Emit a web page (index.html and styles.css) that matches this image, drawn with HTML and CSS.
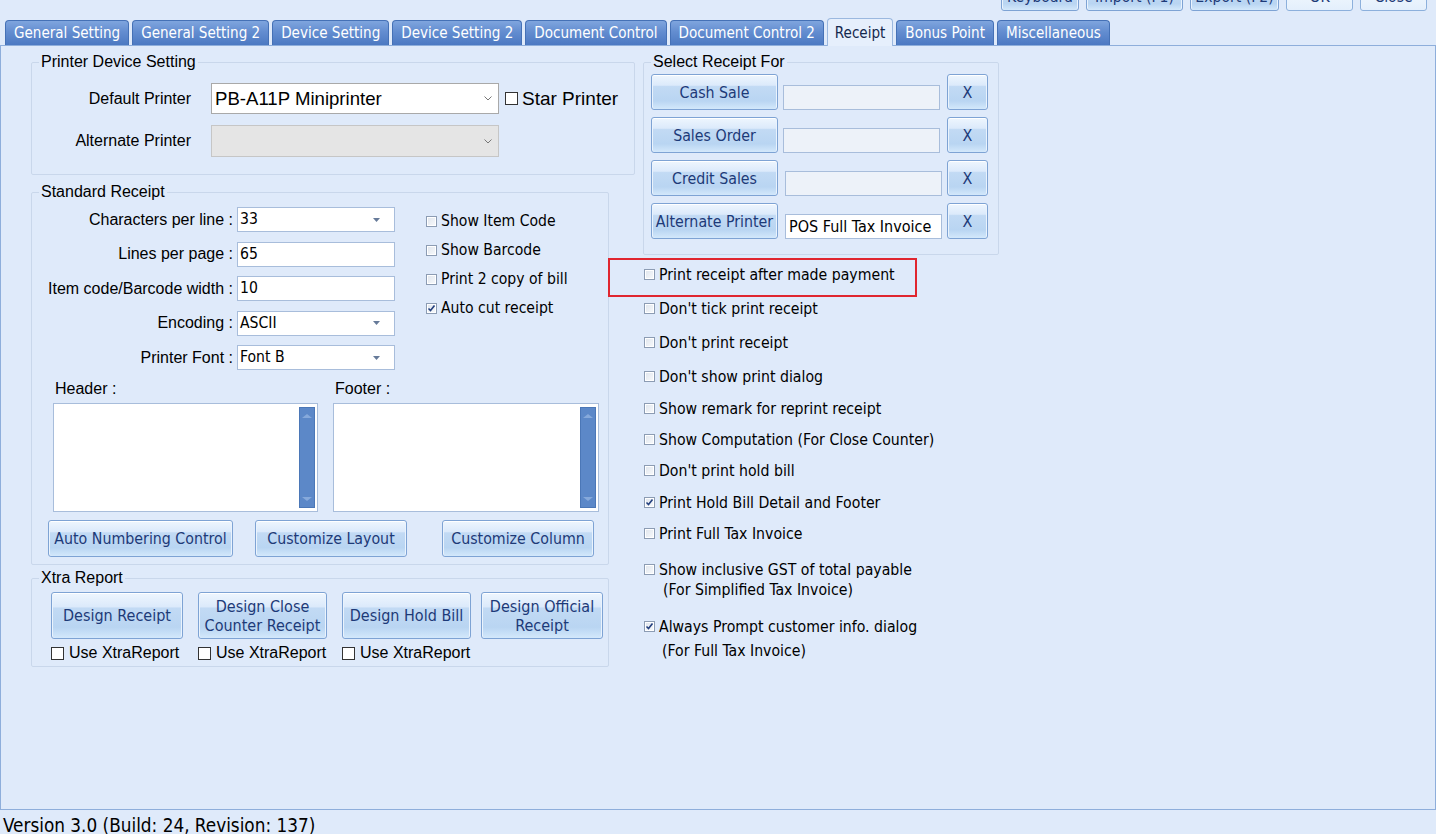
FILE: index.html
```html
<!DOCTYPE html>
<html lang="en">
<head>
    <meta charset="UTF-8">
    <title>Receipt Settings</title>
    <link rel="stylesheet" href="styles.css">
</head>
<body>
    <!-- Top toolbar (mostly scrolled above the window) -->
    <div class="toolbar">
        <button class="btn top-btn w78">Keyboard</button>
        <button class="btn top-btn w97">Import (F1)</button>
        <button class="btn top-btn w89">Export (F2)</button>
        <button class="btn top-btn top-light">OK</button>
        <button class="btn top-btn top-light">Close</button>
    </div>

    <!-- Tabs -->
    <div class="tabs">
        <div class="tab">General Setting</div>
        <div class="tab">General Setting 2</div>
        <div class="tab">Device Setting</div>
        <div class="tab">Device Setting 2</div>
        <div class="tab">Document Control</div>
        <div class="tab">Document Control 2</div>
        <div class="tab active">Receipt</div>
        <div class="tab">Bonus Point</div>
        <div class="tab">Miscellaneous</div>
    </div>

    <div class="panel">
        <div class="col-left">
            <!-- Printer Device Setting -->
            <fieldset class="group printer-group">
                <legend>Printer Device Setting</legend>
                <div class="pd-row">
                    <span class="pd-label">Default Printer</span>
                    <div class="win-select">
                        <span>PB-A11P Miniprinter</span>
                        <svg width="8" height="5" viewBox="0 0 8 5"><path d="M0.5 0.5 4 4 7.5 0.5" stroke="#777" fill="none"/></svg>
                    </div>
                    <span class="plain-check star"><span class="sq"></span>Star Printer</span>
                </div>
                <div class="pd-row pd-row-2">
                    <span class="pd-label">Alternate Printer</span>
                    <div class="win-select disabled">
                        <span></span>
                        <svg width="8" height="5" viewBox="0 0 8 5"><path d="M0.5 0.5 4 4 7.5 0.5" stroke="#777" fill="none"/></svg>
                    </div>
                </div>
            </fieldset>

            <!-- Standard Receipt -->
            <fieldset class="group receipt-group">
                <legend>Standard Receipt</legend>
                <div class="sr-top">
                    <div class="sr-form">
                        <span class="sr-label">Characters per line :</span>
                        <div class="combo"><span>33</span><svg width="7" height="4" viewBox="0 0 7 4"><path d="M0 0h7L3.5 4z" fill="#667a99"/></svg></div>
                        <span class="sr-label">Lines per page :</span>
                        <div class="field">65</div>
                        <span class="sr-label">Item code/Barcode width :</span>
                        <div class="field">10</div>
                        <span class="sr-label">Encoding :</span>
                        <div class="combo"><span>ASCII</span><svg width="7" height="4" viewBox="0 0 7 4"><path d="M0 0h7L3.5 4z" fill="#667a99"/></svg></div>
                        <span class="sr-label">Printer Font :</span>
                        <div class="combo"><span>Font B</span><svg width="7" height="4" viewBox="0 0 7 4"><path d="M0 0h7L3.5 4z" fill="#667a99"/></svg></div>
                    </div>
                    <div class="sr-checks">
                        <div class="opt"><span class="box"></span>Show Item Code</div>
                        <div class="opt"><span class="box"></span>Show Barcode</div>
                        <div class="opt"><span class="box"></span>Print 2 copy of bill</div>
                        <div class="opt"><span class="box on"><svg width="9" height="9" viewBox="0 0 9 9"><path d="M1.5 4.5 3.5 6.5 7.5 1.5" stroke="#24407e" stroke-width="1.6" fill="none"/></svg></span>Auto cut receipt</div>
                    </div>
                </div>

                <div class="memo-grid">
                    <span class="memo-label">Header :</span>
                    <span class="memo-label">Footer :</span>
                    <div class="memo"><div class="vscroll"><i class="up"></i><i class="down"></i></div></div>
                    <div class="memo"><div class="vscroll"><i class="up"></i><i class="down"></i></div></div>
                </div>

                <div class="sr-buttons">
                    <button class="btn btn-auto">Auto Numbering Control</button>
                    <button class="btn btn-layout">Customize Layout</button>
                    <button class="btn btn-column">Customize Column</button>
                </div>
            </fieldset>

            <!-- Xtra Report -->
            <fieldset class="group xtra-group">
                <legend>Xtra Report</legend>
                <div class="xr-row">
                    <div class="xr-item w132">
                        <button class="btn xr-btn">Design Receipt</button>
                        <span class="plain-check"><span class="sq"></span>Use XtraReport</span>
                    </div>
                    <div class="xr-item w129">
                        <button class="btn xr-btn">Design Close<br>Counter Receipt</button>
                        <span class="plain-check"><span class="sq"></span>Use XtraReport</span>
                    </div>
                    <div class="xr-item w129">
                        <button class="btn xr-btn">Design Hold Bill</button>
                        <span class="plain-check"><span class="sq"></span>Use XtraReport</span>
                    </div>
                    <div class="xr-item w122 last">
                        <button class="btn xr-btn">Design Official<br>Receipt</button>
                    </div>
                </div>
            </fieldset>
        </div>

        <div class="col-right">
            <!-- Select Receipt For -->
            <fieldset class="group select-group">
                <legend>Select Receipt For</legend>
                <div class="sel-list">
                    <div class="sel-row">
                        <button class="btn sel-btn">Cash Sale</button>
                        <div class="sel-field"></div>
                        <button class="btn x-btn">X</button>
                    </div>
                    <div class="sel-row">
                        <button class="btn sel-btn">Sales Order</button>
                        <div class="sel-field"></div>
                        <button class="btn x-btn">X</button>
                    </div>
                    <div class="sel-row shifted">
                        <button class="btn sel-btn">Credit Sales</button>
                        <div class="sel-field"></div>
                        <button class="btn x-btn">X</button>
                    </div>
                    <div class="sel-row shifted">
                        <button class="btn sel-btn">Alternate Printer</button>
                        <div class="sel-field filled">POS Full Tax Invoice</div>
                        <button class="btn x-btn">X</button>
                    </div>
                </div>
            </fieldset>

            <div class="opt-list">
                <div class="opt highlighted"><span class="mark"></span><span class="box"></span>Print receipt after made payment</div>
                <div class="opt wide"><span class="box"></span>Don't tick print receipt</div>
                <div class="opt wide"><span class="box"></span>Don't print receipt</div>
                <div class="opt wide"><span class="box"></span>Don't show print dialog</div>
                <div class="opt"><span class="box"></span>Show remark for reprint receipt</div>
                <div class="opt"><span class="box"></span>Show Computation (For Close Counter)</div>
                <div class="opt"><span class="box"></span>Don't print hold bill</div>
                <div class="opt"><span class="box on"><svg width="9" height="9" viewBox="0 0 9 9"><path d="M1.5 4.5 3.5 6.5 7.5 1.5" stroke="#24407e" stroke-width="1.6" fill="none"/></svg></span>Print Hold Bill Detail and Footer</div>
                <div class="opt"><span class="box"></span>Print Full Tax Invoice</div>
                <div class="opt tall multi">
                    <span class="box"></span>
                    <div>
                        <div>Show inclusive GST of total payable</div>
                        <div class="opt-sub">(For Simplified Tax Invoice)</div>
                    </div>
                </div>
                <div class="opt tall multi">
                    <span class="box on"><svg width="9" height="9" viewBox="0 0 9 9"><path d="M1.5 4.5 3.5 6.5 7.5 1.5" stroke="#24407e" stroke-width="1.6" fill="none"/></svg></span>
                    <div>
                        <div>Always Prompt customer info. dialog</div>
                        <div class="opt-sub spaced">(For Full Tax Invoice)</div>
                    </div>
                </div>
            </div>
        </div>
    </div>

    <div class="status">Version 3.0 (Build: 24, Revision: 137)</div>
</body>
</html>
```

FILE: styles.css
```css
* {
    margin: 0;
    padding: 0;
    box-sizing: border-box;
}

body {
    font-family: "DejaVu Sans Condensed", "DejaVu Sans", sans-serif;
    font-size: 15.6px;
    color: #000;
    background: #dfeafa;
    width: 1436px;
    height: 834px;
    overflow: hidden;
}

/* ---------- buttons ---------- */

.btn {
    font-family: inherit;
    font-size: 15.8px;
    color: #1d3a78;
    border: 1px solid #7ea3d4;
    border-radius: 3px;
    background: linear-gradient(#eef6fe 0%, #dceafb 30%, #c2daf4 34%, #b9d5f2 76%, #d3e8fb 100%);
    box-shadow: inset 0 1px 0 #fff, inset 1px 0 0 #eaf3fd, inset -1px 0 0 #eaf3fd;
    line-height: 19px;
    padding: 0;
    cursor: pointer;
}

.toolbar {
    display: flex;
    justify-content: flex-end;
    gap: 7px;
    height: 28px;
    margin-top: -17px;
    padding-right: 9px;
}

.top-btn {
    height: 28px;
    font-size: 15.6px;
}

.w78 { width: 78px; }
.w97 { width: 97px; }
.w89 { width: 89px; }

.top-light {
    width: 67px;
    background: linear-gradient(#f6fafe, #e3effc);
    border-color: #8cb0dc;
}

/* ---------- tabs ---------- */

.tabs {
    display: flex;
    align-items: flex-end;
    gap: 3px;
    height: 26px;
    margin-top: 8px;
    padding-left: 5px;
    position: relative;
    z-index: 1;
}

.tab {
    height: 25px;
    padding: 0 8px;
    line-height: 25px;
    font-size: 15.05px;
    color: #fff;
    border: 1px solid #4571b6;
    border-bottom: none;
    border-radius: 4px 4px 0 0;
    background: linear-gradient(#7fa5de 0%, #638dd0 45%, #4c79c2 100%);
}

.tab.active {
    height: 28px;
    margin-bottom: -1px;
    padding: 0 7px;
    color: #14284d;
    background: #e6effc;
    border-color: #9bb8df;
    line-height: 28px;
}

/* ---------- main panel ---------- */

.panel {
    display: flex;
    gap: 8px;
    height: 765px;
    padding: 7px 0 0 30px;
    border: 1px solid #8eaedb;
}

.col-left {
    width: 604px;
}

.col-right {
    width: 356px;
}

.group {
    border: 1px solid #c9d7eb;
    border-radius: 2px;
    min-width: 0;
}

.group legend {
    font-family: "Liberation Sans", Arial, sans-serif;
    font-size: 16px;
    line-height: 18px;
    margin-left: 7px;
    padding: 0 2px;
}

/* printer device */

.printer-group {
    padding: 12px 0 17px 0;
}

.pd-row {
    display: flex;
    align-items: center;
    height: 31px;
}

.pd-row-2 {
    height: 32px;
    margin-top: 11px;
}

.pd-label {
    width: 159px;
    text-align: right;
    margin-right: 20px;
    font-family: "Liberation Sans", Arial, sans-serif;
    font-size: 16px;
}

.win-select {
    display: flex;
    align-items: center;
    justify-content: space-between;
    width: 288px;
    height: 100%;
    padding: 0 6px 0 3px;
    background: #fff;
    border: 1px solid #a9a9a9;
    font-family: "Liberation Sans", Arial, sans-serif;
    font-size: 18.6px;
}

.win-select.disabled {
    background: #e5e5e5;
    border-color: #c6c6c6;
}

.plain-check {
    display: flex;
    align-items: center;
    gap: 5px;
    font-family: "Liberation Sans", Arial, sans-serif;
    font-size: 16px;
}

.plain-check .sq {
    width: 13px;
    height: 13px;
    background: #fff;
    border: 1px solid #333;
}

.star {
    margin-left: 6px;
    gap: 4px;
    font-size: 19px;
}

/* standard receipt */

.receipt-group {
    margin-top: 8px;
    width: 578px;
    padding: 6px 0 7px 0;
}

.sr-top {
    display: flex;
}

.sr-form {
    display: grid;
    grid-template-columns: 201px 158px;
    column-gap: 4px;
    row-gap: 9.5px;
    align-items: center;
}

.sr-label {
    text-align: right;
    font-family: "Liberation Sans", Arial, sans-serif;
    font-size: 16px;
}

.field,
.combo {
    height: 25px;
    background: #fff;
    border: 1px solid #a8bddb;
    padding-left: 2px;
    line-height: 23px;
    font-size: 15.6px;
}

.combo {
    display: flex;
    align-items: center;
    justify-content: space-between;
    padding-right: 14px;
}

.sr-checks {
    display: flex;
    flex-direction: column;
    gap: 9px;
    margin-left: 31px;
    padding-top: 4px;
}

.opt {
    display: flex;
    align-items: center;
    gap: 4px;
    height: 20px;
    font-size: 15.6px;
    white-space: nowrap;
}

.box {
    display: flex;
    align-items: center;
    justify-content: center;
    flex-shrink: 0;
    width: 11px;
    height: 11px;
    border: 1px solid #8c9cb3;
    background: linear-gradient(135deg, #dfe5ed, #f8fafc);
    box-shadow: inset 0 0 0 1px #fff;
}

.memo-grid {
    display: grid;
    grid-template-columns: 265px 266px;
    column-gap: 15px;
    row-gap: 5px;
    margin: 10px 0 0 21px;
}

.memo-label {
    font-family: "Liberation Sans", Arial, sans-serif;
    font-size: 16px;
    line-height: 18px;
    padding-left: 2px;
}

.memo {
    display: flex;
    justify-content: flex-end;
    height: 109px;
    padding: 3px 2px 3px 0;
    background: #fff;
    border: 1px solid #a8bddb;
}

.vscroll {
    display: flex;
    flex-direction: column;
    justify-content: space-between;
    align-items: center;
    width: 16px;
    padding: 6px 0;
    background: #5c88c8;
    border: 1px solid #4b77b7;
}

.vscroll i {
    width: 0;
    height: 0;
    border-left: 5px solid transparent;
    border-right: 5px solid transparent;
}

.vscroll .up {
    border-bottom: 4px solid #86a9db;
}

.vscroll .down {
    border-top: 4px solid #86a9db;
}

.sr-buttons {
    display: flex;
    margin: 8px 0 0 16px;
}

.sr-buttons .btn {
    height: 37px;
}

.btn-auto {
    width: 185px;
}

.btn-layout {
    width: 152px;
    margin-left: 22px;
}

.btn-column {
    width: 152px;
    margin-left: 35px;
}

/* xtra report */

.xtra-group {
    margin-top: 4px;
    width: 578px;
    padding: 5px 0 4px 0;
}

.xr-row {
    display: flex;
    gap: 15px;
    padding-left: 19px;
}

.xr-item {
    display: flex;
    flex-direction: column;
    gap: 5px;
}

.xr-item.last {
    margin-left: -5px;
}

.w132 { width: 132px; }
.w129 { width: 129px; }
.w122 { width: 122px; }

.xr-btn {
    height: 47px;
    font-size: 16px;
}

.xr-item .plain-check {
    height: 18px;
    white-space: nowrap;
}

/* select receipt for */

.select-group {
    padding: 3px 0 15px 0;
}

.sel-list {
    padding-left: 7px;
}

.sel-row {
    display: flex;
    align-items: flex-end;
    margin-bottom: 7px;
}

.sel-row:last-child {
    margin-bottom: 0;
}

.sel-btn {
    width: 127px;
    height: 36px;
    font-size: 15.8px;
}

.sel-field {
    width: 157px;
    height: 25px;
    margin-left: 5px;
    padding-left: 3px;
    line-height: 23px;
    background: #edf2f9;
    border: 1px solid #a8bddb;
    font-size: 16px;
}

.sel-field.filled {
    background: #fff;
}

.x-btn {
    width: 41px;
    height: 36px;
    margin-left: 7px;
    font-size: 16px;
}

.sel-row.shifted .sel-field {
    margin-left: 7px;
}

.sel-row.shifted .x-btn {
    margin-left: 5px;
}

/* option list */

.opt-list {
    display: flex;
    flex-direction: column;
    gap: 11.3px;
    margin-top: 9px;
    padding-left: 1px;
}

.opt-list .opt {
    font-size: 15.7px;
}

.opt.wide {
    margin-top: 3px;
}

.opt.tall {
    margin-top: 5.5px;
}

.opt.multi {
    height: auto;
    align-items: flex-start;
    line-height: 20px;
}

.opt.multi .box {
    margin-top: 4px;
}

.opt-sub {
    padding-left: 4px;
}

.opt-sub.spaced {
    margin-top: 4px;
    padding-left: 3px;
}

.highlighted {
    position: relative;
}

.mark {
    position: absolute;
    left: -36px;
    top: -6px;
    width: 309px;
    height: 39px;
    border: 2px solid #e0262f;
}

/* ---------- status bar ---------- */

.status {
    padding: 6px 0 0 3px;
    font-size: 18.8px;
    line-height: 20px;
}
```
